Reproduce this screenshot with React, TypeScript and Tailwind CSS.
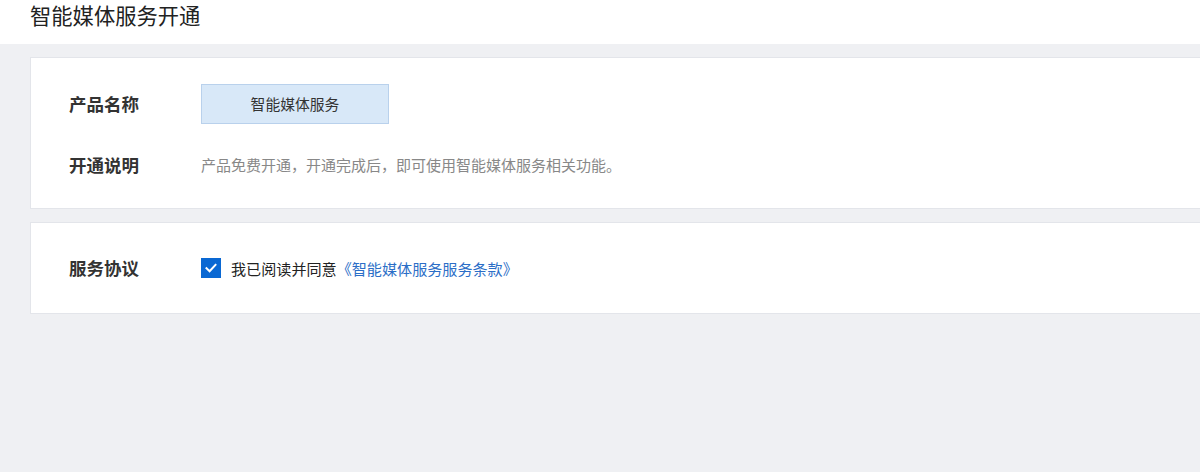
export default function App() {
  const font = { fontFamily: '"Noto Sans CJK SC", "Liberation Sans", sans-serif' };

  return (
    <div className="w-[1200px] h-[472px] overflow-hidden bg-[#eff0f3]" style={font}>
      <div className="h-[44px] bg-white pl-[30px] flex items-start">
        <h1 className="text-[21.3px] leading-[30px] text-[#222] font-normal">智能媒体服务开通</h1>
      </div>

      <div className="pl-[30px] pt-[13px] flex flex-col gap-[13px]">
        <div className="w-[1200px] h-[152px] bg-white border border-[#e3e5ea] pl-[38px] pt-[26px]">
          <div className="flex items-center h-[40px]">
            <div className="w-[132px] text-[17.5px] font-bold text-[#333]">产品名称</div>
            <div className="w-[188px] h-[40px] bg-[#d8e8f8] border border-[#b9d1ec] flex items-center justify-center text-[14.8px] text-[#333]">
              智能媒体服务
            </div>
          </div>
          <div className="flex items-center h-[40px] mt-[21px]">
            <div className="w-[132px] text-[17.5px] font-bold text-[#333]">开通说明</div>
            <div className="text-[15px] text-[#888]">产品免费开通，开通完成后，即可使用智能媒体服务相关功能。</div>
          </div>
        </div>

        <div className="w-[1200px] h-[92px] bg-white border border-[#e3e5ea] pl-[38px] flex items-center">
          <div className="w-[132px] text-[17.5px] font-bold text-[#333]">服务协议</div>
          <div className="flex items-center">
            <span className="w-[20px] h-[20px] bg-[#0a68d3] flex items-center justify-center">
              <svg width="14" height="14" viewBox="0 0 14 14" fill="none">
                <path d="M2.5 7.2 L5.6 10.2 L11.5 3.8" stroke="white" strokeWidth="2" strokeLinecap="square" />
              </svg>
            </span>
            <span className="ml-[10px] text-[15.1px] text-[#222]">我已阅读并同意</span>
            <a className="text-[15.1px] text-[#2b6ec7]">《智能媒体服务服务条款》</a>
          </div>
        </div>
      </div>
    </div>
  );
}
